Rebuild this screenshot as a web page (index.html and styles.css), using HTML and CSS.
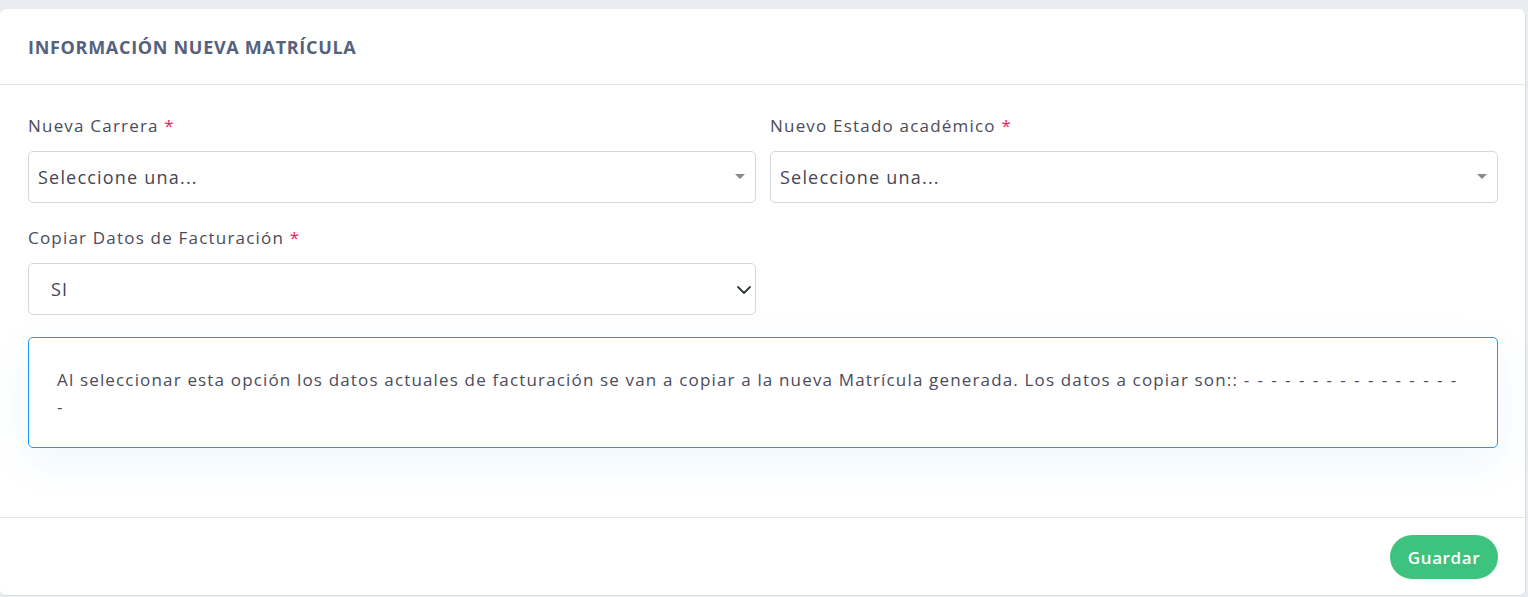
FILE: index.html
```html
<!DOCTYPE html>
<html lang="es">
<head>
    <meta charset="UTF-8">
    <title>Nueva Matrícula</title>
    <link rel="stylesheet" href="styles.css">
</head>
<body>
    <div class="card">
        <div class="card-header">
            <h5>INFORMACIÓN NUEVA MATRÍCULA</h5>
        </div>
        <div class="card-body">
            <div class="form-row">
                <div class="form-group">
                    <label>Nueva Carrera <span class="req">*</span></label>
                    <div class="select2">
                        <span class="select2-text">Seleccione una...</span>
                        <span class="caret"></span>
                    </div>
                </div>
                <div class="form-group">
                    <label>Nuevo Estado académico <span class="req">*</span></label>
                    <div class="select2">
                        <span class="select2-text">Seleccione una...</span>
                        <span class="caret"></span>
                    </div>
                </div>
                <div class="form-group">
                    <label>Copiar Datos de Facturación <span class="req">*</span></label>
                    <div class="form-select">
                        <span>SI</span>
                        <svg class="chevron" width="14" height="8" viewBox="0 0 14 8"><path d="M1 1l6 6 6-6" fill="none" stroke="#343a40" stroke-width="1.8" stroke-linecap="round" stroke-linejoin="round"/></svg>
                    </div>
                </div>
            </div>
            <div class="alert">
                Al seleccionar esta opción los datos actuales de facturación se van a copiar a la nueva Matrícula generada. Los datos a copiar son:: <span class="dashes">- - - - - - - - - - - - - - - - -</span>
            </div>
        </div>
        <div class="card-footer">
            <button class="btn-save">Guardar</button>
        </div>
    </div>
</body>
</html>
```

FILE: styles.css
```css
body {
    margin: 0;
    background-color: #e9edf1;
    font-family: "Open Sans", sans-serif;
    color: #4b4b5a;
}

.card {
    margin-top: 9px;
    width: 1526px;
    height: 587px;
    background-color: #fff;
    border-radius: 6px;
    border-right: 1px solid #dcdde3;
    border-bottom: 1px solid #dcdde3;
    box-sizing: border-box;
    display: flex;
    flex-direction: column;
}

.card-header {
    height: 76px;
    border-bottom: 1px solid #e4e4ec;
    padding: 0 28px;
    display: flex;
    align-items: center;
    box-sizing: border-box;
}

.card-header h5 {
    margin: 0;
    font-size: 18px;
    font-weight: 700;
    color: #56617d;
    letter-spacing: 0.7px;
}

.card-body {
    padding: 30px 27px 0 28px;
    height: 432px;
    box-sizing: border-box;
}

.form-row {
    display: grid;
    grid-template-columns: 728px 728px;
    column-gap: 14px;
    row-gap: 24px;
}

.form-group label {
    display: block;
    font-size: 17px;
    line-height: 22px;
    letter-spacing: 1.2px;
    margin-bottom: 14px;
    color: #4b4b5a;
}

.req {
    color: #e0245e;
}

.select2, .form-select {
    height: 52px;
    border: 1px solid #d4d8dd;
    border-radius: 5px;
    box-sizing: border-box;
    display: flex;
    align-items: center;
    justify-content: space-between;
    font-size: 18px;
    letter-spacing: 1.2px;
    color: #454555;
}

.select2 {
    padding: 0 10px 0 9px;
}

.caret {
    width: 0;
    height: 0;
    border-left: 5px solid transparent;
    border-right: 5px solid transparent;
    border-top: 5px solid #888;
    margin-bottom: 2px;
}

.form-select {
    padding: 0 4px 0 22px;
}

.chevron {
    margin-top: 2px;
}

.alert {
    margin-top: 22px;
    border: 1px solid #2196f3;
    border-radius: 5px;
    padding: 28px;
    height: 111px;
    box-sizing: border-box;
    font-size: 17px;
    line-height: 27px;
    letter-spacing: 1.16px;
    color: #4b4b5a;
    box-shadow: 0 14px 40px rgba(33, 150, 243, 0.08);
}

.dashes {
    word-spacing: 1.6px;
}

.card-footer {
    flex: 1;
    border-top: 1px solid #e4e4ec;
    display: flex;
    justify-content: flex-end;
    align-items: flex-start;
    padding: 17px 27px 0 0;
}

.btn-save {
    width: 108px;
    height: 44px;
    border: none;
    border-radius: 22px;
    background-color: #3ec37e;
    color: #fff;
    font-family: "Open Sans", sans-serif;
    font-size: 17px;
    font-weight: 600;
    letter-spacing: 0.6px;
    cursor: pointer;
}
```
